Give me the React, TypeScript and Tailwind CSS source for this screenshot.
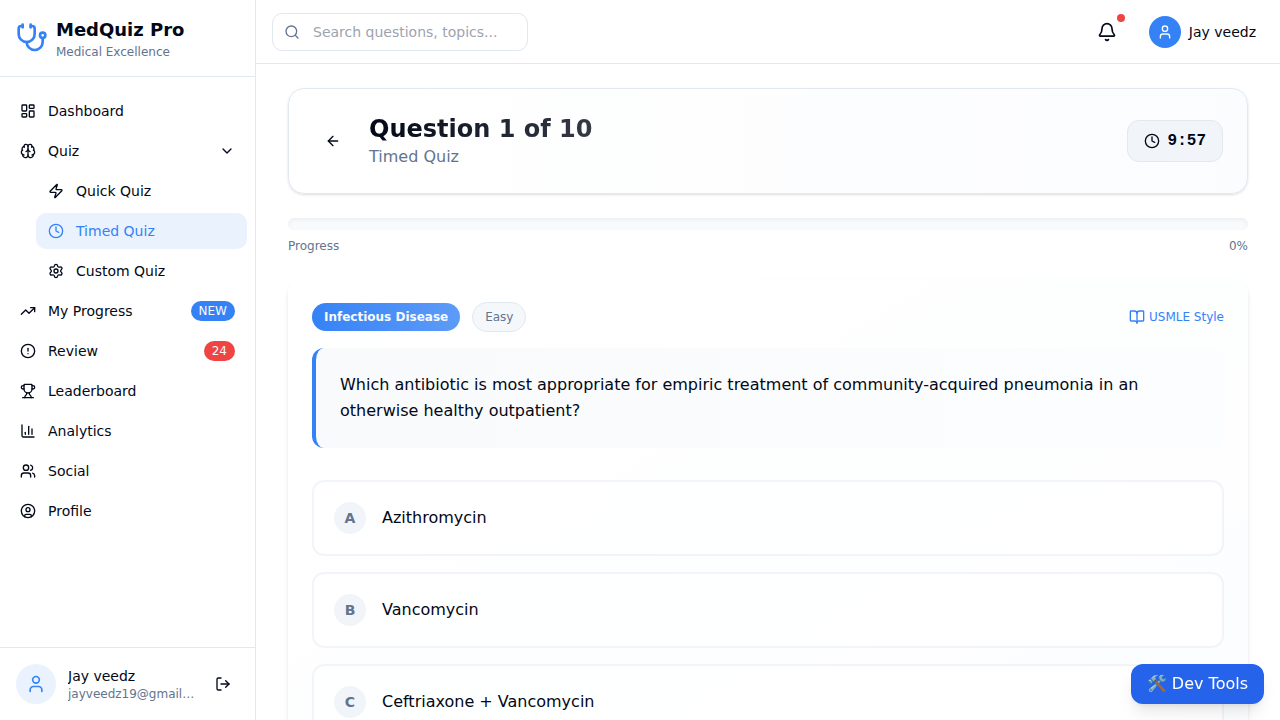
import type { ReactNode } from "react";
import {
  ArrowLeft,
  Bell,
  BookOpen,
  Brain,
  ChartColumn,
  ChevronDown,
  CircleAlert,
  CircleUser,
  Clock,
  LayoutDashboard,
  LogOut,
  Search,
  Settings,
  Stethoscope,
  TrendingUp,
  Trophy,
  User,
  Users,
  Zap,
  type LucideIcon,
} from "lucide-react";

interface NavItemProps {
  icon: LucideIcon;
  label: string;
  active?: boolean;
  children?: ReactNode;
}

function NavItem({ icon: Icon, label, active, children }: NavItemProps) {
  return (
    <a
      href="#"
      aria-current={active ? "page" : undefined}
      className={`flex h-9 items-center gap-3 rounded-[10px] px-3 text-sm ${
        active ? "bg-[#eaf2fe] text-[#3582f6]" : "hover:bg-slate-100"
      }`}
    >
      <Icon className="size-4 shrink-0" />
      <span className="flex-1">{label}</span>
      {children}
    </a>
  );
}

function Sidebar() {
  return (
    <aside className="flex w-64 shrink-0 flex-col border-r border-slate-200 bg-white">
      <div className="flex items-center gap-2 border-b border-slate-200 p-4">
        <Stethoscope className="size-8 text-[#3582f6]" />
        <div>
          <div className="text-lg leading-7 font-bold">MedQuiz Pro</div>
          <p className="text-xs text-slate-500">Medical Excellence</p>
        </div>
      </div>

      <nav aria-label="Main" className="flex flex-1 flex-col gap-1 px-2 py-4">
        <NavItem icon={LayoutDashboard} label="Dashboard" />
        <button
          type="button"
          aria-expanded="true"
          className="flex h-9 items-center gap-3 rounded-[10px] px-3 text-left text-sm hover:bg-slate-100"
        >
          <Brain className="size-4 shrink-0" />
          <span className="flex-1">Quiz</span>
          <ChevronDown className="size-4" />
        </button>
        <div className="ml-7 flex flex-col gap-1">
          <NavItem icon={Zap} label="Quick Quiz" />
          <NavItem icon={Clock} label="Timed Quiz" active />
          <NavItem icon={Settings} label="Custom Quiz" />
        </div>
        <NavItem icon={TrendingUp} label="My Progress">
          <span className="rounded-full bg-[#3582f6] px-2 py-0.5 text-xs text-slate-50">NEW</span>
        </NavItem>
        <NavItem icon={CircleAlert} label="Review">
          <span className="rounded-full bg-[#ef4444] px-2 py-0.5 text-xs text-slate-50">24</span>
        </NavItem>
        <NavItem icon={Trophy} label="Leaderboard" />
        <NavItem icon={ChartColumn} label="Analytics" />
        <NavItem icon={Users} label="Social" />
        <NavItem icon={CircleUser} label="Profile" />
      </nav>

      <div className="flex items-center gap-3 border-t border-slate-200 p-4">
        <div className="flex size-10 shrink-0 items-center justify-center rounded-full bg-[#eaf2fe]">
          <User className="size-5 text-[#3582f6]" />
        </div>
        <div className="min-w-0 flex-1">
          <p className="truncate text-sm">Jay veedz</p>
          <p className="truncate text-xs text-slate-500">jayveedz19@gmail.com</p>
        </div>
        <button type="button" aria-label="Log out" className="flex size-8 shrink-0 items-center justify-center">
          <LogOut className="size-4" />
        </button>
      </div>
    </aside>
  );
}

function TopBar() {
  return (
    <header className="flex h-16 shrink-0 items-center justify-between border-b border-slate-200 bg-white pr-6 pl-4">
      <label className="flex h-[38px] w-64 items-center gap-3 rounded-[10px] border border-slate-200 px-[11px]">
        <Search className="size-4 shrink-0 text-slate-500" />
        <input
          type="search"
          aria-label="Search"
          placeholder="Search questions, topics..."
          className="w-full min-w-0 bg-transparent pl-px text-sm outline-none placeholder:text-[#9ca3af]"
        />
      </label>
      <div className="flex items-center gap-5">
        <button type="button" aria-label="Notifications" className="relative flex h-9 w-11 items-center justify-center">
          <Bell className="size-5" />
          <span className="absolute top-0 right-1 size-2 rounded-full bg-[#ef4444]" />
        </button>
        <button type="button" className="flex items-center gap-2 text-sm">
          <span className="flex size-8 items-center justify-center rounded-full bg-[#3582f6] text-slate-50">
            <User className="size-4" />
          </span>
          Jay veedz
        </button>
      </div>
    </header>
  );
}

const options = [
  { letter: "A", text: "Azithromycin" },
  { letter: "B", text: "Vancomycin" },
  { letter: "C", text: "Ceftriaxone + Vancomycin" },
  { letter: "D", text: "Ciprofloxacin" },
];

function Quiz() {
  return (
    <main className="flex min-h-0 flex-1 flex-col gap-6 overflow-y-auto px-8 py-6 [scrollbar-width:none]">
      <section className="flex shrink-0 items-center justify-between rounded-2xl border border-slate-200 bg-linear-to-r from-white to-[#fbfcfe] p-6 shadow-sm">
        <div className="flex items-center gap-4">
          <button type="button" aria-label="Back" className="flex h-9 w-10 items-center justify-center">
            <ArrowLeft className="size-4" />
          </button>
          <div>
            <h1 className="bg-linear-to-r from-[#020817] to-[#020817]/80 bg-clip-text text-2xl font-bold text-transparent">
              Question 1 of 10
            </h1>
            <p className="text-slate-500">Timed Quiz</p>
          </div>
        </div>
        <div className="flex items-center gap-2 rounded-xl border border-slate-200 bg-slate-100 px-4 py-2">
          <Clock className="size-4" />
          <span className="font-['Liberation_Mono',monospace] font-bold">9:57</span>
        </div>
      </section>

      <div className="shrink-0">
        <div
          role="progressbar"
          aria-label="Progress"
          aria-valuenow={0}
          className="h-3 rounded-full bg-slate-50 shadow-[inset_0_2px_4px_0_rgb(0_0_0/0.05)]"
        />
        <div className="mt-2 flex justify-between text-xs text-slate-500">
          <span>Progress</span>
          <span>0%</span>
        </div>
      </div>

      <section className="shrink-0 rounded-2xl bg-linear-to-br from-white to-[#fcfdfe] p-6 shadow-[0_4px_6px_-1px_rgb(0_0_0/0.1),0_2px_4px_-2px_rgb(0_0_0/0.1)]">
        <div className="flex items-center justify-between">
          <div className="flex items-center gap-3 text-xs">
            <span className="rounded-full bg-linear-to-r from-[#3582f6] to-[#5d9bf8] px-3 py-1.5 font-semibold text-slate-50">
              Infectious Disease
            </span>
            <span className="rounded-full border border-slate-200 bg-[#f4f8fb] px-3 py-1.5 text-slate-500">Easy</span>
          </div>
          <div className="flex items-center gap-1 text-xs text-[#3582f6]">
            <BookOpen className="size-4" />
            USMLE Style
          </div>
        </div>

        <h2 className="mt-4 rounded-xl border-l-4 border-[#3582f6] bg-linear-to-r from-[#f9fafc] to-[#fcfdfe] p-6 text-base leading-[26px]">
          Which antibiotic is most appropriate for empiric treatment of community-acquired pneumonia in an otherwise
          healthy outpatient?
        </h2>

        <div className="mt-8 flex flex-col gap-4">
          {options.map((option) => (
            <button
              key={option.letter}
              type="button"
              className="flex items-center gap-4 rounded-xl border-2 border-slate-100 bg-white/50 p-5 text-left hover:border-blue-200"
            >
              <span className="flex size-8 shrink-0 items-center justify-center rounded-full bg-slate-100 text-sm font-bold text-slate-500">
                {option.letter}
              </span>
              {option.text}
            </button>
          ))}
        </div>
      </section>
    </main>
  );
}

export default function App() {
  return (
    <div className="flex h-screen overflow-hidden bg-white font-['DejaVu_Sans',sans-serif] text-[#020817]">
      <Sidebar />
      <div className="flex min-w-0 flex-1 flex-col">
        <TopBar />
        <Quiz />
      </div>
      <button
        type="button"
        className="fixed right-4 bottom-4 rounded-xl bg-[#2563eb] px-4 py-2 text-white shadow-lg"
      >
        🛠️ Dev Tools
      </button>
    </div>
  );
}
